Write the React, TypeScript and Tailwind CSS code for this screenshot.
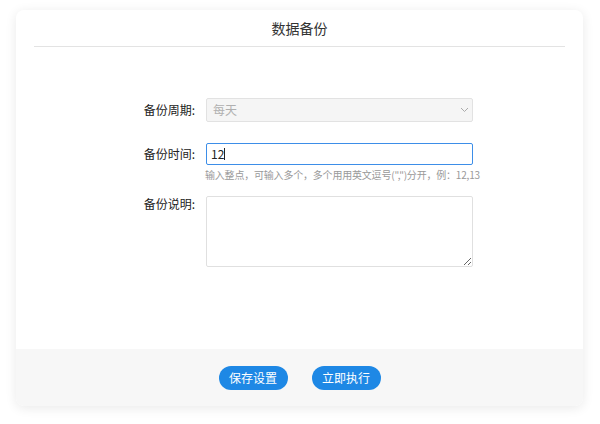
import React from 'react';

const font = { fontFamily: '"Microsoft YaHei", "Noto Sans CJK SC", "Liberation Sans", sans-serif' };

const App: React.FC = () => {
  return (
    <div className="w-[600px] h-[424px] bg-white pt-[10px]" style={font}>
      <div className="ml-[16px] w-[567px] h-[396px] rounded-[8px] bg-white shadow-[0_2px_12px_rgba(0,0,0,0.09)] flex flex-col overflow-hidden">
        {/* Header */}
        <div className="h-[37px] mx-[18px] border-b border-[#e3e3e3] flex items-center justify-center text-[14px] text-[#333]">
          数据备份
        </div>

        {/* Form */}
        <div className="flex-1 pt-[51px]">
          <div className="flex items-center h-[24px]">
            <div className="w-[179px] text-right text-[12px] text-[#222]">备份周期:</div>
            <div className="ml-[11px] w-[267px] h-[24px] bg-[#f5f5f5] border border-[#e2e2e2] rounded-[2px] flex items-center justify-between pl-[6px] pr-[3px]">
              <span className="text-[12px] text-[#b0b0b0]">每天</span>
              <svg width="9" height="6" viewBox="0 0 9 6" fill="none">
                <path d="M1 1l3.5 3.5L8 1" stroke="#aaa" strokeWidth="1" />
              </svg>
            </div>
          </div>

          <div className="flex items-center h-[22px] mt-[21px]">
            <div className="w-[179px] text-right text-[12px] text-[#222]">备份时间:</div>
            <div className="ml-[11px] w-[267px] h-[22px] border border-[#3d8ee8] rounded-[2px] flex items-center px-[4px]">
              <span className="text-[12px] text-[#222] leading-none">12</span>
              <span className="w-px h-[12px] bg-[#222]" />
            </div>
          </div>

          <div className="ml-[189px] mt-[3px] text-[10px] leading-[14px] text-[#999] tracking-[-0.2px]">
            输入整点，可输入多个，多个用用英文逗号(",")分开，例：12,13
          </div>

          <div className="flex items-start mt-[14px]">
            <div className="w-[179px] text-right text-[12px] leading-[16px] text-[#222]">备份说明:</div>
            <textarea
              className="ml-[11px] w-[267px] h-[71px] border border-[#e0e0e0] rounded-[2px] outline-none"
              defaultValue=""
            />
          </div>
        </div>

        {/* Footer */}
        <div className="h-[57px] bg-[#f7f7f7] flex items-center justify-center gap-[24px]">
          <button className="w-[69px] h-[24px] rounded-full bg-[#1e88e5] text-white text-[12px]">保存设置</button>
          <button className="w-[69px] h-[24px] rounded-full bg-[#1e88e5] text-white text-[12px]">立即执行</button>
        </div>
      </div>
    </div>
  );
};

export default App;
